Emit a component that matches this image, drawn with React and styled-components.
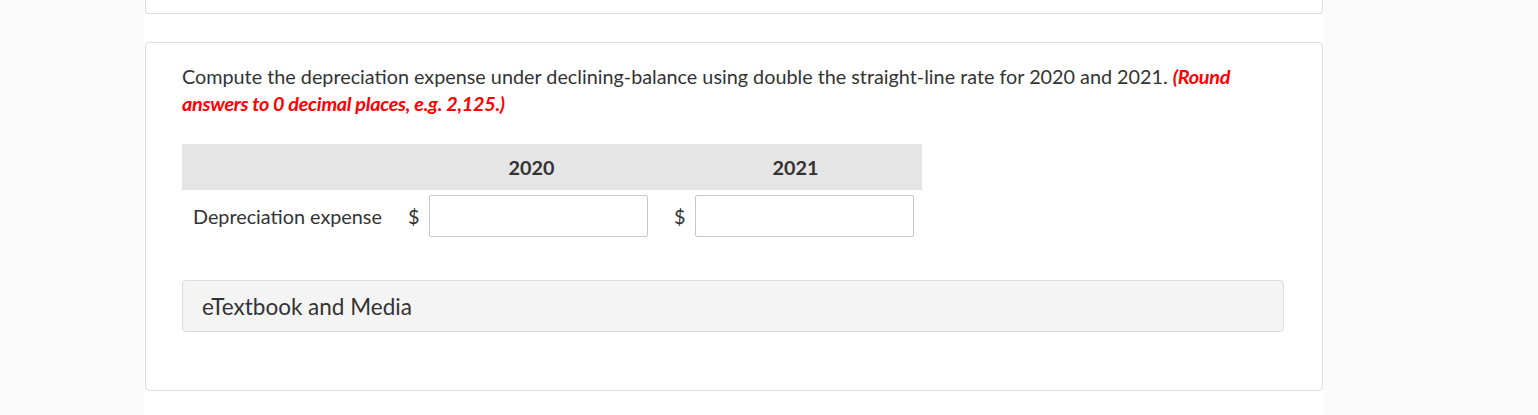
import React from "react";
import styled, { createGlobalStyle } from "styled-components";

const Global = createGlobalStyle`
  html, body { margin: 0; padding: 0; background: #fafafa; }
  body { font-family: Lato, "Open Sans", sans-serif; color: #333; }
  * { box-sizing: border-box; }
`;

const Column = styled.div`
  width: 1180px;
  margin-left: 144px;
  min-height: 415px;
  background: #fff;
  padding: 0 1px;
  display: flex;
  flex-direction: column;
`;

const TopCard = styled.div`
  height: 14px;
  border: 1px solid #dcdcdc;
  border-top: none;
  border-radius: 0 0 4px 4px;
  background: #fff;
`;

const Card = styled.section`
  margin-top: 28px;
  border: 1px solid #dcdcdc;
  border-radius: 4px;
  background: #fff;
  padding: 20px 38px 58px 36px;
`;

const Question = styled.p`
  margin: 0 0 27px;
  font-size: 19.8px;
  line-height: 27px;
  color: #333;
`;

const Hint = styled.span`
  color: #ff0000;
  font-weight: 700;
  font-style: italic;
  letter-spacing: -0.27px;
`;

const Table = styled.div`
  width: 740px;
  display: flex;
  flex-direction: column;
`;

const HeaderRow = styled.div`
  display: grid;
  grid-template-columns: 212px 275px 253px;
  height: 46px;
  background: #e5e5e5;
  align-items: center;
`;

const HeadCell = styled.div`
  text-align: center;
  font-weight: 700;
  font-size: 19.8px;
  color: #333;
`;

const BodyRow = styled.div`
  display: grid;
  grid-template-columns: 226px 266px 248px;
  align-items: center;
  padding-top: 5px;
`;

const Label = styled.div`
  padding-left: 11px;
  font-size: 19.8px;
  color: #333;
`;

const ValueCell = styled.div`
  display: flex;
  align-items: center;
  gap: 12px;
`;

const Dollar = styled.span`
  width: 9px;
  font-size: 19.8px;
  color: #333;
`;

const Input = styled.input`
  width: 219px;
  height: 42px;
  border: 1px solid #c8c8c8;
  border-radius: 2px;
  background: #fff;
  font-family: inherit;
  font-size: 18px;
  padding: 0 8px;
  outline: none;
`;

const MediaBox = styled.div`
  margin-top: 43px;
  height: 52px;
  border: 1px solid #dcdcdc;
  border-radius: 4px;
  background: #f4f4f4;
  display: flex;
  align-items: center;
  padding-left: 19px;
  font-size: 22.5px;
  color: #333;
`;

export default function App() {
  const years = ["2020", "2021"];
  return (
    <>
      <Global />
      <Column>
        <TopCard />
        <Card>
          <Question>
            Compute the depreciation expense under declining-balance using double the straight-line rate for 2020 and 2021.{" "}
            <Hint>(Round answers to 0 decimal places, e.g. 2,125.)</Hint>
          </Question>
          <Table>
            <HeaderRow>
              <HeadCell />
              {years.map((y) => (
                <HeadCell key={y}>{y}</HeadCell>
              ))}
            </HeaderRow>
            <BodyRow>
              <Label>Depreciation expense</Label>
              {years.map((y) => (
                <ValueCell key={y}>
                  <Dollar>$</Dollar>
                  <Input type="text" aria-label={`Depreciation expense ${y}`} />
                </ValueCell>
              ))}
            </BodyRow>
          </Table>
          <MediaBox>eTextbook and Media</MediaBox>
        </Card>
      </Column>
    </>
  );
}
